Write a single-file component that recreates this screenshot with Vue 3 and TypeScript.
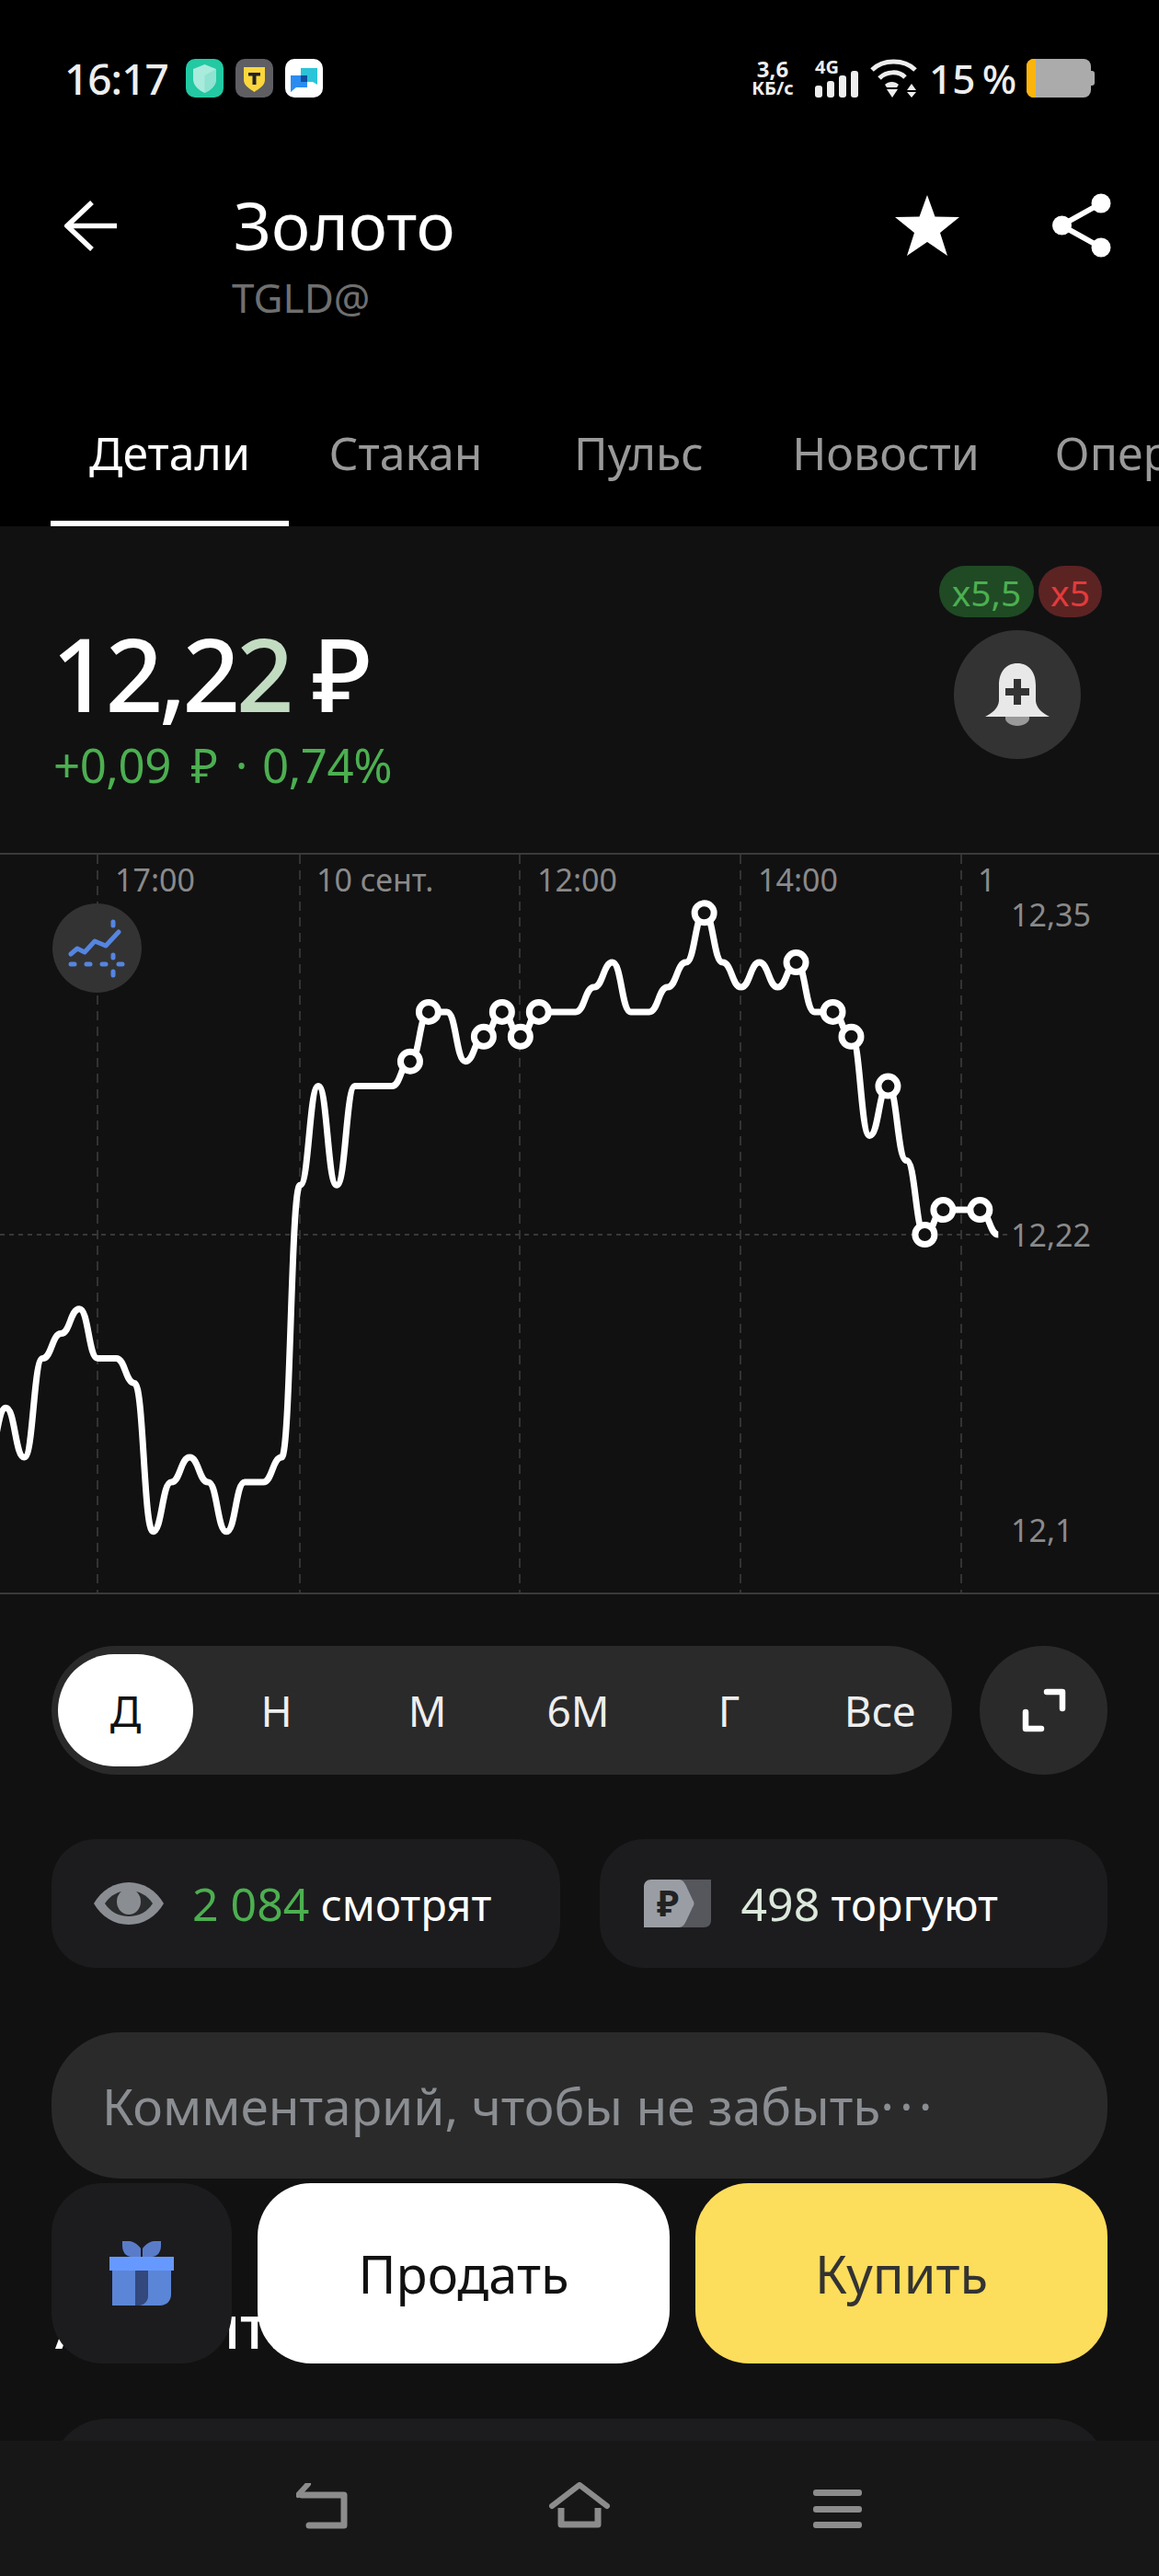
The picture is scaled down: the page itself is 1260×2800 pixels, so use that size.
<script setup lang="ts">
import { computed } from 'vue'

const tabs = [
  { label: 'Детали', width: 259, active: true },
  { label: 'Стакан', width: 254, active: false },
  { label: 'Пульс', width: 253, active: false },
  { label: 'Новости', width: 284, active: false },
  { label: 'Операции', width: 330, active: false },
]

const periods = ['Д', 'Н', 'М', '6М', 'Г', 'Все']

// price steps relative to 12,22 (one step is one kopeck)
const levels = [
  -7, -9, -5, -4, -3, -5, -5, -6, -12, -10, -9, -10, -12, -10, -10, -9, 2, 6, 2, 6, 6, 6, 7, 9, 9, 7, 8, 9, 8, 9, 9, 9,
  10, 11, 9, 9, 10, 11, 13, 11, 10, 11, 10, 11, 9, 9, 8, 4, 6, 3, 0, 1, 1, 1, 0,
]
const markerIndexes = [22, 23, 26, 27, 28, 29, 38, 43, 45, 46, 48, 50, 51, 53]

const baseY = 413
const xAt = (i: number) => 6.4 + 19.98 * i
const yAt = (level: number) => baseY - level * 26.9

const linePath = computed(() => {
  let d = `M${xAt(-1)} ${yAt(-9)}`
  let prevX = xAt(-1)
  let prevY = yAt(-9)
  levels.forEach((level, i) => {
    const x = xAt(i)
    const y = yAt(level)
    const mid = (prevX + x) / 2
    d += ` C${mid} ${prevY} ${mid} ${y} ${x} ${y}`
    prevX = x
    prevY = y
  })
  return d
})

const markers = computed(() => markerIndexes.map((i) => ({ x: xAt(i), y: yAt(levels[i]) })))

const gridX = [106, 326, 565, 805, 1045]
const timeLabels = [
  { text: '17:00', left: 125 },
  { text: '10 сент.', left: 344 },
  { text: '12:00', left: 584 },
  { text: '14:00', left: 824 },
  { text: '1', left: 1063 },
]
const priceLabels = [
  { text: '12,35', top: 40 },
  { text: '12,22', top: 388 },
  { text: '12,1', top: 709 },
]
</script>

<template>
  <div class="screen">
    <div class="top">
      <div class="status">
        <span class="time">16:17</span>
        <svg class="app-icon first" viewBox="0 0 41 42">
          <rect width="41" height="42" rx="10" fill="#22c9a3" />
          <path d="M20.5 6 L33 11 V22 C33 29 27 34 20.5 37 C14 34 8 29 8 22 V11 Z" fill="#a9ebdc" />
          <path d="M20.5 18 L33 11 V22 C33 29 27 34 20.5 37 Z" fill="#8fe3d0" />
        </svg>
        <svg class="app-icon" viewBox="0 0 41 42">
          <rect width="41" height="42" rx="10" fill="#5e5e63" />
          <path d="M9 9 H32 V23 C32 29 26 32 20.5 36 C15 32 9 29 9 23 Z" fill="#fbd63d" />
          <rect x="14" y="15" width="13" height="3.5" fill="#222" />
          <rect x="18.5" y="15" width="4" height="13" fill="#222" />
        </svg>
        <svg class="app-icon" viewBox="0 0 41 42">
          <rect width="41" height="42" rx="10" fill="#fff" />
          <path d="M17 10 H35 V28 L30 25 H17 Z" fill="#2bc4d8" />
          <path d="M6 18 H24 V31 H12 L6 36 Z" fill="#2a8cf0" />
          <rect x="17" y="18" width="7" height="7" fill="#0f4f9e" />
        </svg>
        <div class="status-right">
          <div class="speed">
            <span class="speed-num">3,6</span>
            <span class="speed-unit">КБ/с</span>
          </div>
          <div class="signal">
            <span class="net">4G</span>
            <svg class="bars" viewBox="0 0 47 29">
              <rect x="0" y="16" width="8" height="13" rx="3" fill="#eee" />
              <rect x="13" y="11" width="8" height="18" rx="3" fill="#eee" />
              <rect x="26" y="5" width="8" height="24" rx="3" fill="#eee" />
              <rect x="39" y="0" width="8" height="29" rx="3" fill="#eee" />
            </svg>
          </div>
          <svg class="wifi" viewBox="0 0 51 42">
            <path d="M2 12 C14 0 37 0 49 12" fill="none" stroke="#eee" stroke-width="5" />
            <path d="M10 21 C18 13 31 13 38 20" fill="none" stroke="#eee" stroke-width="5" />
            <path d="M16 28 C20 24 27 24 31 28 L29 31 H18 Z" fill="#eee" />
            <path d="M18 33 H30 L24 42 Z" fill="#eee" />
            <path d="M45 27 L50 34 H40 Z M40 36 H50 L45 42 Z" fill="#eee" />
          </svg>
          <span class="battery-text">15 %</span>
          <div class="battery">
            <div class="battery-body"><div class="battery-level"></div></div>
            <div class="battery-cap"></div>
          </div>
        </div>
      </div>

      <div class="header">
        <svg class="back" viewBox="0 0 57 55">
          <path d="M30 2 L3 27.5 L30 53 M3 27.5 H57" fill="none" stroke="#fff" stroke-width="5.5" />
        </svg>
        <div class="title-block">
          <div class="title">Золото</div>
          <div class="ticker">TGLD@</div>
        </div>
        <svg class="star" viewBox="0 0 70 66">
          <path d="M35 0 L43.5 23.5 L70 24 L49 41 L57 66 L35 51 L13 66 L21 41 L0 24 L26.5 23.5 Z" fill="#fff" />
        </svg>
        <svg class="share" viewBox="0 0 64 70">
          <path d="M53 11 L10 35 L53 59" fill="none" stroke="#fff" stroke-width="6" />
          <circle cx="53" cy="11" r="10.5" fill="#fff" />
          <circle cx="10.5" cy="35" r="10.5" fill="#fff" />
          <circle cx="53" cy="59" r="10.5" fill="#fff" />
        </svg>
      </div>

      <div class="tabs">
        <div
          v-for="tab in tabs"
          :key="tab.label"
          class="tab"
          :class="{ active: tab.active }"
          :style="{ width: tab.width + 'px' }"
        >
          {{ tab.label }}
        </div>
      </div>
    </div>

    <div class="quote">
      <div class="prices">
        <div class="price">12,2<span class="price-tail">2</span> ₽</div>
        <div class="change">
          <span class="change-abs">+0,09 ₽</span>
          <span class="dot">·</span>
          <span>0,74%</span>
        </div>
      </div>
      <div class="quote-side">
        <div class="badges">
          <span class="badge long">x5,5</span>
          <span class="badge short">x5</span>
        </div>
        <div class="bell">
          <svg viewBox="0 0 70 68">
            <path d="M22 58 H48 V60 C48 64 42 68 35 68 C28 68 22 64 22 60 Z" fill="#9a9a9a" />
            <path d="M35 0 C48 0 55 10 55 24 V40 C55 48 62 54 70 58 H0 C8 54 15 48 15 40 V24 C15 10 22 0 35 0 Z" fill="#e8e8e8" />
            <path d="M31 17 H39 V27 H48 V35 H39 V45 H31 V35 H22 V27 H31 Z" fill="#333" />
          </svg>
        </div>
      </div>
    </div>

    <div class="chart">
      <svg class="chart-lines" viewBox="0 0 1260 802">
        <line
          v-for="x in gridX"
          :key="x"
          :x1="x"
          y1="0"
          :x2="x"
          y2="802"
          stroke="#333"
          stroke-width="2"
          stroke-dasharray="10 7"
        />
        <line x1="0" :y1="baseY" x2="1100" :y2="baseY" stroke="#383838" stroke-width="2" stroke-dasharray="5 5" />
        <path :d="linePath" fill="none" stroke="#fff" stroke-width="7" stroke-linejoin="round" />
        <circle v-for="m in markers" :key="m.x" :cx="m.x" :cy="m.y" r="10.5" fill="#111" stroke="#fff" stroke-width="7" />
      </svg>
      <span v-for="t in timeLabels" :key="t.text" class="time-label" :style="{ left: t.left + 'px' }">{{ t.text }}</span>
      <span v-for="p in priceLabels" :key="p.text" class="price-label" :style="{ top: p.top + 'px' }">{{ p.text }}</span>
      <div class="trend">
        <svg viewBox="0 0 97 97">
          <path d="M20 55 L27 49 L35 53 L46 41 L58 46 L72 31" fill="none" stroke="#5585e0" stroke-width="5" stroke-linecap="round" stroke-linejoin="round" />
          <path d="M20 66 H24 M37 66 H41 M54 66 H58 M72 66 H76" fill="none" stroke="#5585e0" stroke-width="5" stroke-linecap="round" />
          <path d="M66 20 V24 M66 56 V59 M66 74 V78" fill="none" stroke="#5585e0" stroke-width="5" stroke-linecap="round" />
        </svg>
      </div>
    </div>

    <div class="controls">
      <div class="periods">
        <div v-for="(p, i) in periods" :key="p" class="period" :class="{ selected: i === 0 }">{{ p }}</div>
      </div>
      <div class="expand">
        <svg viewBox="0 0 48 48">
          <path d="M27 4 H44 V22 M4 26 V44 H21" fill="none" stroke="#fff" stroke-width="6.5" stroke-linejoin="round" stroke-linecap="round" />
        </svg>
      </div>
    </div>

    <div class="stats">
      <div class="stat">
        <svg class="eye" viewBox="0 0 76 46">
          <path d="M0 23 C8 9 22 0 38 0 C54 0 68 9 76 23 C68 37 54 46 38 46 C22 46 8 37 0 23 Z" fill="#8a8d92" />
          <path d="M12 23 C18 14 27 9 38 9 C49 9 58 14 64 23 C58 32 49 37 38 37 C27 37 18 32 12 23 Z" fill="#2b2c2e" />
          <ellipse cx="38" cy="21" rx="13" ry="14" fill="#8a8d92" />
        </svg>
        <span class="stat-text"><span class="green">2 084</span> смотрят</span>
      </div>
      <div class="stat">
        <svg class="ruble-card" viewBox="0 0 73 52">
          <path d="M30 0 H73 V44 C73 49 70 52 65 52 H30 Z" fill="#55575c" />
          <path d="M8 0 H38 C42 0 44 3 46 7 L53 22 C55 25 55 27 53 30 L46 45 C44 49 42 52 38 52 H0 V8 C0 3 3 0 8 0 Z" fill="#9a9ea4" />
          <text x="26" y="40" class="ruble-glyph">₽</text>
        </svg>
        <span class="stat-text"><span class="pale">498</span> торгуют</span>
      </div>
    </div>

    <div class="comment">Комментарий, чтобы не забыть<span class="dots">···</span></div>

    <div class="section-title">Аналитика</div>
    <div class="next-card"></div>

    <div class="actions">
      <div class="gift">
        <svg viewBox="0 0 70 70">
          <path d="M14 0 H22 C28 1 32 5 34 8 V17 H24 C18 17 14 12 14 5 Z M56 0 H48 C42 1 38 5 36 8 V17 H46 C52 17 56 12 56 5 Z" fill="#5a7cc8" />
          <path d="M3 32 H67 V58 C67 65 62 70 55 70 H3 Z" fill="#5b85d6" />
          <path d="M28 32 H42 V60 C42 65 38 69 33 70 H28 Z" fill="#33487c" />
          <rect x="0" y="17" width="70" height="15" fill="#6699ff" />
        </svg>
      </div>
      <div class="btn sell">Продать</div>
      <div class="btn buy">Купить</div>
    </div>

    <div class="nav">
      <svg class="nav-back" viewBox="0 0 56 50">
        <path d="M6 13 H52 V46 H14" fill="none" stroke="#8c8c8c" stroke-width="7" stroke-linejoin="round" stroke-linecap="round" />
        <path d="M13 1 L2 13" fill="none" stroke="#8c8c8c" stroke-width="6" stroke-linecap="round" />
      </svg>
      <svg class="nav-home" viewBox="0 0 66 50">
        <path d="M3 26 L33 3 L63 26" fill="none" stroke="#8c8c8c" stroke-width="6" stroke-linecap="round" stroke-linejoin="round" />
        <path d="M13 28 V46 H53 V28" fill="none" stroke="#8c8c8c" stroke-width="7" stroke-linejoin="round" />
      </svg>
      <div class="nav-menu">
        <span></span>
        <span></span>
        <span></span>
      </div>
    </div>
  </div>
</template>

<style scoped>
.screen {
  position: relative;
  width: 1260px;
  height: 2800px;
  overflow: hidden;
  background: #111112;
  font-family: 'Noto Sans', sans-serif;
  color: #fff;
}

.top {
  height: 572px;
  background: #000;
}

.status {
  display: flex;
  align-items: flex-start;
  height: 106px;
  padding: 64px 70px 0;
  box-sizing: border-box;
}

.time {
  width: 132px;
  font-size: 46px;
  line-height: 42px;
  letter-spacing: -1px;
  font-weight: 500;
  color: #eee;
}

.app-icon {
  width: 41px;
  height: 42px;
  margin-right: 13px;
}

.status-right {
  display: flex;
  align-items: flex-start;
  margin-left: auto;
}

.speed {
  display: flex;
  flex-direction: column;
  align-items: center;
  width: 50px;
  font-weight: 700;
  color: #eee;
}

.speed-num {
  font-size: 24px;
  line-height: 22px;
}

.speed-unit {
  font-size: 20px;
  line-height: 20px;
  white-space: nowrap;
}

.signal {
  display: flex;
  flex-direction: column;
  width: 47px;
  margin-left: 21px;
}

.net {
  font-size: 20px;
  line-height: 18px;
  font-weight: 700;
  color: #eee;
}

.bars {
  width: 47px;
  height: 29px;
  margin-top: -5px;
}

.wifi {
  width: 51px;
  height: 42px;
  margin-left: 13px;
}

.battery-text {
  margin-left: 13px;
  width: 92px;
  font-size: 44px;
  line-height: 42px;
  font-weight: 500;
  word-spacing: -4px;
  color: #eee;
  white-space: nowrap;
}

.battery {
  display: flex;
  align-items: center;
  margin-left: 14px;
  height: 42px;
}

.battery-body {
  width: 70px;
  height: 42px;
  border-radius: 8px;
  background: #ababab;
  overflow: hidden;
}

.battery-level {
  width: 10px;
  height: 100%;
  background: #fbb40c;
}

.battery-cap {
  width: 4px;
  height: 16px;
  border-radius: 0 3px 3px 0;
  background: #ababab;
}

.header {
  display: flex;
  align-items: flex-start;
  height: 314px;
  padding: 104px 52px 0 70px;
  box-sizing: border-box;
}

.back {
  width: 57px;
  height: 55px;
  margin-top: 8px;
}

.title-block {
  margin-left: 125px;
}

.title {
  font-size: 71px;
  line-height: 70px;
  margin-left: 2px;
}

.ticker {
  margin-top: 18px;
  font-size: 44px;
  line-height: 50px;
  color: #6f6f6f;
}

.star {
  width: 70px;
  height: 66px;
  margin-left: auto;
  margin-top: 2px;
}

.share {
  width: 64px;
  height: 70px;
  margin-left: 101px;
}

.tabs {
  display: flex;
  height: 152px;
  padding-left: 55px;
  white-space: nowrap;
  overflow: hidden;
}

.tab {
  flex: none;
  box-sizing: border-box;
  text-align: center;
  font-size: 50px;
  line-height: 144px;
  color: #999;
}

.tab.active {
  color: #fff;
  border-bottom: 6px solid #fff;
}

.quote {
  display: flex;
  justify-content: space-between;
  height: 355px;
  box-sizing: border-box;
  padding: 0 62px 0 56px;
}

.prices {
  padding-top: 97px;
}

.price {
  font-size: 110px;
  line-height: 124px;
  font-weight: 500;
  letter-spacing: -4.5px;
  white-space: nowrap;
}

.price-tail {
  color: #c2dcc2;
}

.change {
  display: flex;
  margin-top: 8px;
  margin-left: 2px;
  font-size: 51px;
  line-height: 60px;
  letter-spacing: -0.5px;
  color: #4caf50;
  white-space: nowrap;
}

.change-abs {
  word-spacing: 9px;
}

.dot {
  margin: 0 16px 0 19px;
}

.quote-side {
  display: flex;
  flex-direction: column;
  align-items: center;
  padding-top: 43px;
}

.badges {
  display: flex;
  gap: 5px;
}

.badge {
  display: flex;
  align-items: center;
  justify-content: center;
  height: 56px;
  border-radius: 28px;
  font-size: 39px;
}

.badge.long {
  width: 103px;
  background: #1f4a24;
  color: #4caf50;
}

.badge.short {
  width: 69px;
  background: #5c2323;
  color: #e23b3b;
}

.bell {
  display: flex;
  align-items: center;
  justify-content: center;
  width: 138px;
  height: 140px;
  margin-top: 14px;
  margin-right: 7px;
  border-radius: 50%;
  background: #333;
}

.bell svg {
  width: 70px;
  height: 68px;
}

.chart {
  position: relative;
  height: 806px;
  box-sizing: border-box;
  border-top: 2px solid #3a3a3a;
  border-bottom: 2px solid #3a3a3a;
}

.chart-lines {
  position: absolute;
  inset: 0;
  width: 1260px;
  height: 802px;
}

.time-label {
  position: absolute;
  top: 2px;
  font-size: 34px;
  line-height: 50px;
  color: #8a8a8a;
  white-space: nowrap;
}

.price-label {
  position: absolute;
  left: 1099px;
  font-size: 34px;
  line-height: 50px;
  color: #8a8a8a;
}

.trend {
  position: absolute;
  left: 57px;
  top: 53px;
  width: 97px;
  height: 97px;
  border-radius: 50%;
  background: #333;
}

.trend svg {
  display: block;
  width: 97px;
  height: 97px;
}

.controls {
  display: flex;
  justify-content: space-between;
  padding: 56px 56px 0;
}

.periods {
  display: flex;
  gap: 17px;
  width: 979px;
  height: 140px;
  box-sizing: border-box;
  padding: 9px 0 9px 7px;
  border-radius: 70px;
  background: #2a2a2a;
}

.period {
  flex: none;
  width: 147px;
  border-radius: 61px;
  display: flex;
  align-items: center;
  justify-content: center;
  font-size: 46px;
  color: #eee;
}

.period.selected {
  background: #fff;
  color: #111;
}

.expand {
  display: flex;
  align-items: center;
  justify-content: center;
  width: 139px;
  height: 140px;
  border-radius: 50%;
  background: #2a2a2a;
}

.expand svg {
  width: 48px;
  height: 48px;
}

.stats {
  display: flex;
  gap: 43px;
  padding: 70px 56px 0;
}

.stat {
  flex: 1;
  display: flex;
  align-items: center;
  height: 140px;
  padding-left: 46px;
  box-sizing: border-box;
  border-radius: 48px;
  background: #1c1c1e;
}

.eye {
  width: 76px;
  height: 46px;
  margin-right: 31px;
}

.ruble-card {
  width: 73px;
  height: 52px;
  margin-right: 33px;
  margin-left: 2px;
}

.ruble-glyph {
  font-family: 'Noto Sans', sans-serif;
  font-size: 40px;
  font-weight: 700;
  text-anchor: middle;
  fill: #222;
}

.stat-text {
  font-size: 47px;
  white-space: nowrap;
}

.green,
.pale {
  font-size: 50px;
}

.green {
  color: #4caf50;
}

.pale {
  color: #dbe8db;
}

.comment {
  display: flex;
  align-items: center;
  height: 159px;
  margin: 70px 56px 0;
  padding-left: 55px;
  border-radius: 75px;
  background: #2a2a2a;
  font-size: 55px;
  color: #8a8d91;
  white-space: nowrap;
}

.dots {
  letter-spacing: 6px;
}

.section-title {
  margin: 124px 0 0 60px;
  font-size: 66px;
  line-height: 70px;
  font-weight: 500;
  letter-spacing: -0.5px;
}

.next-card {
  height: 300px;
  margin: 67px 56px 0;
  border-radius: 60px;
  background: #1c1c1e;
}

.actions {
  position: absolute;
  left: 56px;
  top: 2373px;
  display: flex;
  height: 196px;
}

.gift {
  display: flex;
  align-items: center;
  justify-content: center;
  width: 196px;
  border-radius: 55px;
  background: #1c1c1e;
}

.gift svg {
  width: 70px;
  height: 70px;
}

.btn {
  display: flex;
  align-items: center;
  justify-content: center;
  width: 448px;
  border-radius: 58px;
  font-size: 56px;
}

.sell {
  margin-left: 28px;
  background: #fff;
  color: #111;
}

.buy {
  margin-left: 28px;
  background: #fddd5c;
  color: #333;
}

.nav {
  position: absolute;
  left: 0;
  right: 0;
  bottom: 0;
  height: 147px;
  background: #171717;
}

.nav-back {
  position: absolute;
  left: 322px;
  top: 46px;
  width: 56px;
  height: 50px;
}

.nav-home {
  position: absolute;
  left: 597px;
  top: 45px;
  width: 66px;
  height: 50px;
}

.nav-menu {
  position: absolute;
  left: 884px;
  top: 53px;
  width: 53px;
  height: 42px;
  display: flex;
  flex-direction: column;
  justify-content: space-between;
}

.nav-menu span {
  height: 7px;
  border-radius: 3px;
  background: #8c8c8c;
}
</style>
